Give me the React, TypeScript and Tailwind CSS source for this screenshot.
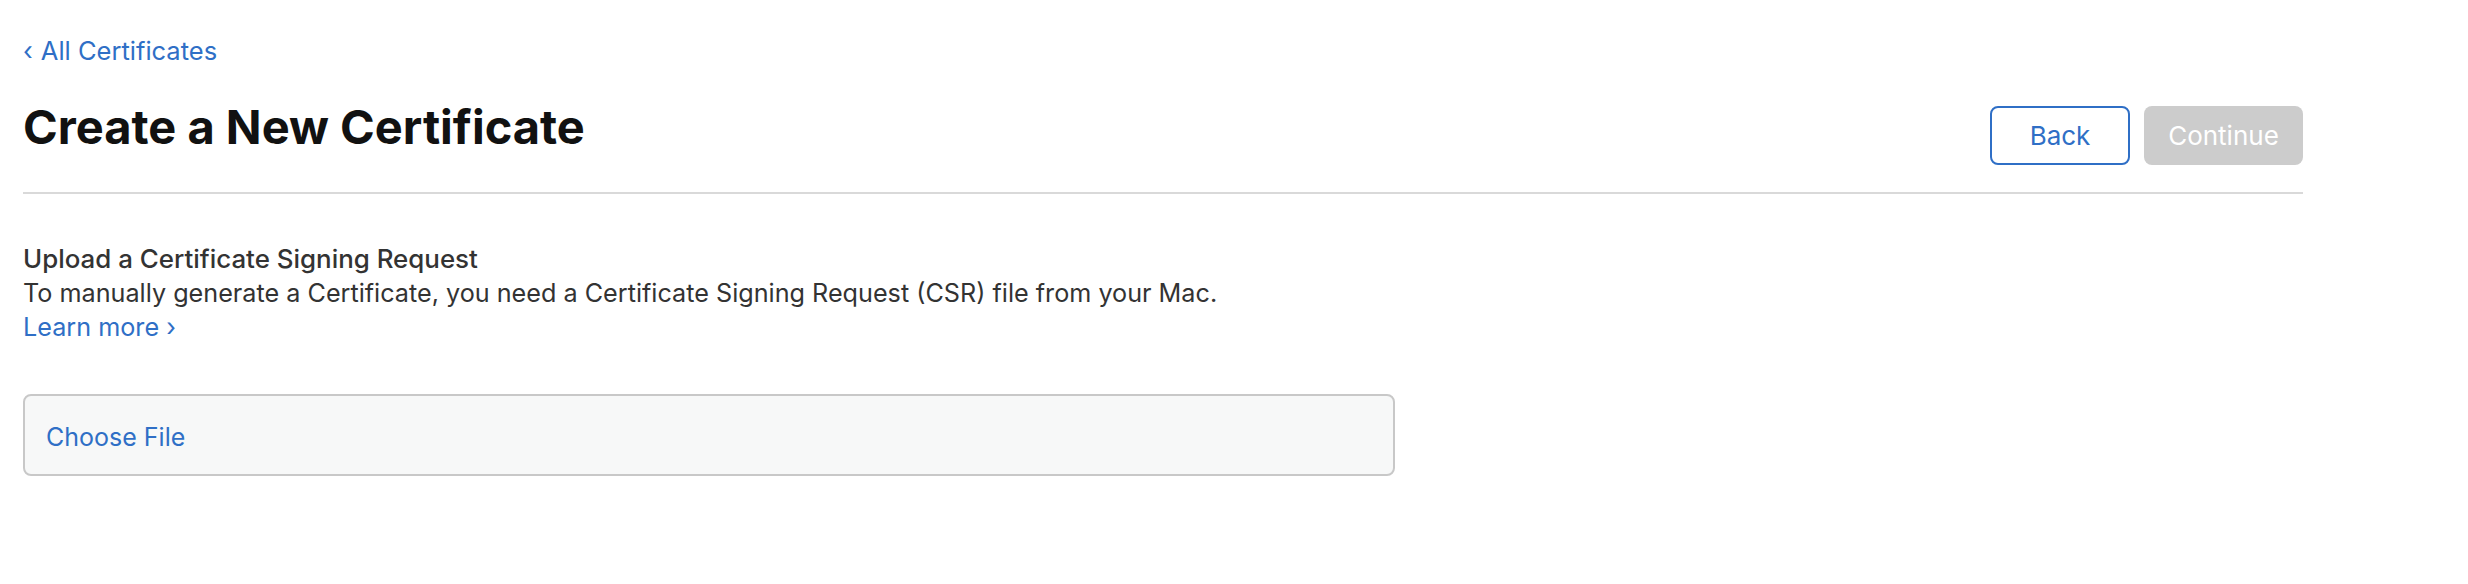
import React from 'react';

export default function App() {
  return (
    <div className="min-h-screen w-full bg-white font-['Inter','Liberation_Sans',sans-serif] antialiased">
      <div className="w-[2280px] ml-[23px] pt-[35px]">
        {/* Breadcrumb */}
        <a href="#" className="block text-[25.5px] leading-[32px] text-[#2f6fc6]">
          <span className="mr-[8px]">‹</span>All Certificates
        </a>

        {/* Header row */}
        <div className="mt-[32px] flex items-start justify-between border-b-2 border-[#d9d9d9] pb-[27px]">
          <h1 className="text-[47px] leading-[56px] font-bold text-[#111111]">Create a New Certificate</h1>
          <div className="mt-[7px] flex gap-[14px]">
            <button className="h-[59px] w-[140px] rounded-[8px] border-2 border-[#2f6fc6] bg-white text-[26px] text-[#2f6fc6]">
              Back
            </button>
            <button disabled className="h-[59px] w-[159px] rounded-[8px] bg-[#cccccc] text-[26px] text-white">
              Continue
            </button>
          </div>
        </div>

        {/* CSR section */}
        <div className="mt-[47px] text-[25.2px] leading-[34px] text-[#333333]">
          <h2 className="font-medium text-[25.9px] pt-[1px]">Upload a Certificate Signing Request</h2>
          <p>To manually generate a Certificate, you need a Certificate Signing Request (CSR) file from your Mac.</p>
          <a href="#" className="text-[#2f6fc6]">Learn more ›</a>
        </div>

        <div className="mt-[50px] flex h-[82px] w-[1372px] items-center rounded-[8px] border-2 border-[#c8c8c8] bg-[#f7f8f8] pl-[21px] pt-[3px]">
          <span className="text-[25px] leading-[32px] text-[#2f6fc6]">Choose File</span>
        </div>
      </div>
    </div>
  );
}
